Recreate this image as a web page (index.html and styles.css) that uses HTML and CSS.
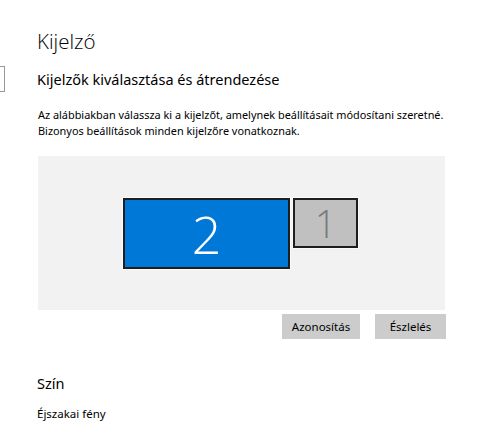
FILE: index.html
```html
<!DOCTYPE html>
<html lang="hu">
<head>
<meta charset="utf-8">
<link rel="stylesheet" href="styles.css">
</head>
<body>
<div class="nav-edge"></div>
<main class="page">
  <h1 class="title">Kijelző</h1>
  <h2 class="subtitle">Kijelzők kiválasztása és átrendezése</h2>
  <p class="desc">Az alábbiakban válassza ki a kijelzőt, amelynek beállításait módosítani szeretné.<br>Bizonyos beállítások minden kijelzőre vonatkoznak.</p>
  <div class="arrange">
    <div class="monitor monitor-2">2</div>
    <div class="monitor monitor-1">1</div>
  </div>
  <div class="actions">
    <button class="btn btn-identify">Azonosítás</button>
    <button class="btn btn-detect">Észlelés</button>
  </div>
  <h3 class="section">Szín</h3>
  <div class="label">Éjszakai fény</div>
</main>
</body>
</html>
```

FILE: styles.css
```css
html, body {
  margin: 0;
  padding: 0;
  background: #fff;
}
body {
  font-family: "Noto Sans", "Open Sans", sans-serif;
  color: #000;
  width: 480px;
  height: 423px;
  overflow: hidden;
  position: relative;
}
.nav-edge {
  position: absolute;
  left: -10px;
  top: 66px;
  width: 13px;
  height: 24px;
  border: 1px solid #999;
}
.page {
  padding: 26px 0 0 37px;
}
.title {
  margin: 0;
  font-family: "Open Sans", "Noto Sans", sans-serif;
  font-size: 20.5px;
  font-weight: 300;
  line-height: 30px;
}
.subtitle {
  margin: 12px 0 0 0;
  font-size: 14.5px;
  font-weight: 400;
  line-height: 22px;
}
.desc {
  margin: 17px 0 0 1px;
  font-size: 10.9px;
  line-height: 16px;
}
.arrange {
  position: relative;
  margin: 17px 0 0 1px;
  width: 407px;
  height: 154px;
  background: #f2f2f2;
}
.monitor {
  position: absolute;
  box-sizing: border-box;
  border: 2px solid #1e1e1e;
  box-shadow: 0 0 0 1px #fafafa;
  display: flex;
  align-items: center;
  justify-content: center;
  font-family: "Open Sans", "Noto Sans", sans-serif;
  font-weight: 300;
}
.monitor-2 {
  left: 85px;
  top: 42px;
  width: 167px;
  height: 71px;
  background: #0078d7;
  color: #fff;
  font-size: 52px;
}
.monitor-1 {
  left: 255px;
  top: 42px;
  width: 65px;
  height: 50px;
  background: #c0c0c0;
  color: #7a7a7a;
  font-size: 38px;
}
.actions {
  display: flex;
  justify-content: flex-end;
  gap: 15px;
  width: 409px;
  margin-top: 4px;
}
.btn {
  font-family: inherit;
  font-size: 11.5px;
  color: #000;
  background: #cccccc;
  border: 0;
  height: 25px;
  padding: 0;
}
.btn-identify { width: 78px; }
.btn-detect { width: 71px; }
.section {
  margin: 33px 0 0 0;
  font-size: 14.5px;
  font-weight: 400;
  line-height: 22px;
}
.label {
  margin-top: 12px;
  font-size: 11.5px;
  line-height: 16px;
}
```
